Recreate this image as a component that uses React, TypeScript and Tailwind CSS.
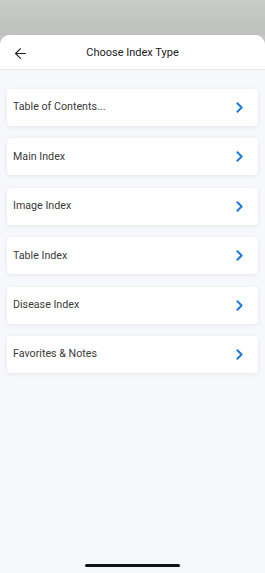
import { ArrowLeft, ChevronRight } from "lucide-react";

const items = [
  "Table of Contents...",
  "Main Index",
  "Image Index",
  "Table Index",
  "Disease Index",
  "Favorites & Notes",
];

export default function App() {
  return (
    <div
      className="h-[573px] w-[265px] overflow-hidden bg-[#c5c7c4] flex flex-col"
      style={{ fontFamily: "Roboto, 'Noto Sans', sans-serif" }}
    >
      <div className="h-[35px] shrink-0 bg-gradient-to-b from-[#c9cbc8] to-[#bfc1be]" />
      <div className="flex-1 flex flex-col rounded-t-[10px] bg-[#f6f8fb] overflow-hidden">
        {/* Header */}
        <div className="h-[35px] shrink-0 pt-[3px] bg-white border-b border-[#e6e8eb] flex items-center relative">
          <ArrowLeft className="absolute left-[12px] top-[10px] w-[17px] h-[17px] text-[#222]" strokeWidth={1.5} />
          <div className="w-full text-center text-[11px] text-[#222]">Choose Index Type</div>
        </div>

        {/* List */}
        <div className="flex flex-col gap-[12.4px] px-[7px] pt-[19px]">
          {items.map((label, index) => (
            <div
              key={index}
              className="h-[37px] rounded-[4px] bg-white shadow-[0_1px_4px_rgba(0,0,0,0.08)] flex items-center justify-between pl-[6px] pr-[12px]"
            >
              <span className="text-[10.7px] text-[#3a3a3a]">{label}</span>
              <ChevronRight className="w-[17px] h-[17px] text-[#1d7ae2] -mr-[2px]" strokeWidth={2.8} />
            </div>
          ))}
        </div>

        <div className="flex-1" />
        {/* Home indicator */}
        <div className="flex justify-center pb-[6px]">
          <div className="w-[95px] h-[3px] rounded-full bg-[#111]" />
        </div>
      </div>
    </div>
  );
}
